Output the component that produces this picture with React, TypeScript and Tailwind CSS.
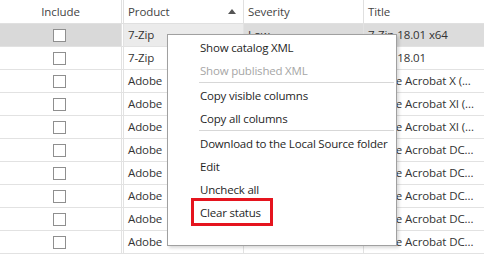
const rows = [
  { product: "7-Zip", severity: "Low", title: "7-Zip 18.01 x64" },
  { product: "7-Zip", severity: "", title: "7-Zip 18.01" },
  { product: "Adobe", severity: "", title: "Adobe Acrobat X (..." },
  { product: "Adobe", severity: "", title: "Adobe Acrobat XI (..." },
  { product: "Adobe", severity: "", title: "Adobe Acrobat XI (..." },
  { product: "Adobe", severity: "", title: "Adobe Acrobat DC..." },
  { product: "Adobe", severity: "", title: "Adobe Acrobat DC..." },
  { product: "Adobe", severity: "", title: "Adobe Acrobat DC..." },
  { product: "Adobe", severity: "", title: "Adobe Acrobat DC..." },
  { product: "Adobe", severity: "", title: "Adobe Acrobat DC..." },
];

const menu: (string | null)[] = [
  "Show catalog XML",
  "Show published XML",
  null,
  "Copy visible columns",
  "Copy all columns",
  null,
  "Download to the Local Source folder",
  "Edit",
  "Uncheck all",
  "Clear status",
];

const ContextMenu = () => {
  return (
    <div className="absolute left-[167px] top-[34px] w-[230px] h-[212px] bg-white border border-[#a0a0a0] shadow-[2px_2px_3px_rgba(0,0,0,0.15)] pt-[1px] text-[11.5px] tracking-[-0.2px]">
      {menu.map((item, i) =>
        item === null ? (
          <div key={i} className="h-px bg-[#d7d7d7] ml-[31px] mr-[2px] mb-[1px]" />
        ) : (
          <div
            key={i}
            className={`relative h-[23px] flex items-center pl-[32px] whitespace-nowrap ${
              item === "Show published XML" ? "text-[#a6a6a6]" : "text-[#1f1f1f]"
            }`}
          >
            {item}
            {/* annotation box round the last entry */}
            {item === "Clear status" && (
              <div className="absolute left-[23px] top-[-3px] w-[82px] h-[28px] border-[3px] border-[#e5141e]" />
            )}
          </div>
        )
      )}
    </div>
  );
};

export default function App() {
  return (
    <div
      className="relative w-[484px] h-[254px] bg-white overflow-hidden text-[11.5px] tracking-[-0.1px] text-[#333]"
      style={{ fontFamily: '"Open Sans", "Noto Sans", sans-serif' }}
    >
      {/* header */}
      <div className="flex h-[24px] border-b border-[#e0e0e0]">
        <div className="w-[121px] flex items-center justify-center text-[#444]">Include</div>
        <div className="w-[3px] border-x border-[#e0e0e0]" />
        <div className="w-[120px] flex items-center justify-between pl-[4px] pr-[7px] border-r border-[#e0e0e0] text-[#444]">
          Product
          <svg width="8" height="5" viewBox="0 0 8 5" className="mb-[1px]">
            <path d="M0 5 L4 0 L8 5 Z" fill="#555" />
          </svg>
        </div>
        <div className="w-[120px] flex items-center pl-[4px] border-r border-[#e0e0e0] text-[#444]">Severity</div>
        <div className="flex-1 flex items-center pl-[4px] text-[#444]">Title</div>
      </div>

      {/* rows */}
      {rows.map((r, i) => {
        const sel = i === 0;
        return (
          <div key={i} className="flex h-[23px] border-b border-[#e2e2e2]">
            <div className={`w-[121px] flex items-center justify-center ${sel ? "bg-[#d9d9d9]" : ""}`}>
              <div className="w-[13px] h-[13px] mr-[3px] border border-[#8f8f8f] bg-white" />
            </div>
            <div className="w-[3px] border-x border-[#e2e2e2]" />
            <div className={`w-[120px] flex items-center pl-[4px] border-r border-[#e2e2e2] whitespace-nowrap overflow-hidden ${sel ? "bg-[#ebebeb]" : ""}`}>
              {r.product}
            </div>
            <div className={`w-[120px] flex items-center pl-[4px] border-r border-[#e2e2e2] whitespace-nowrap overflow-hidden ${sel ? "bg-[#dcdcdc]" : ""}`}>
              {r.severity}
            </div>
            <div className={`flex-1 flex items-center pl-[4px] whitespace-nowrap overflow-hidden ${sel ? "bg-[#dcdcdc]" : ""}`}>
              {r.title}
            </div>
          </div>
        );
      })}

      <ContextMenu />
    </div>
  );
}
